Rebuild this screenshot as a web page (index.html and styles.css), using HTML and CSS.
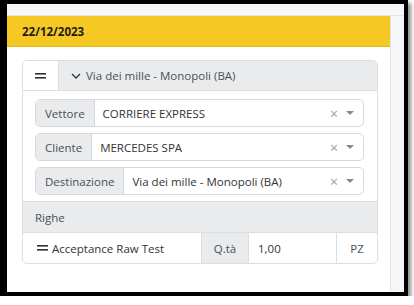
FILE: index.html
```html
<!DOCTYPE html>
<html>
<head>
<meta charset="utf-8">
<link rel="stylesheet" href="styles.css">
</head>
<body>
<div class="frame">
  <div class="topstrip"></div>
  <div class="main">
    <div class="panel">
      <div class="datebar">22/12/2023</div>
      <div class="content">
        <div class="card">
          <div class="card-head">
            <div class="handle">
              <svg width="11" height="6" viewBox="0 0 11 6"><rect x="0" y="0" width="11" height="1.6" fill="#333"/><rect x="0" y="4" width="11" height="1.6" fill="#333"/></svg>
            </div>
            <div class="head-title">
              <svg class="chev" width="10" height="6" viewBox="0 0 10 6"><path d="M1 1 L5 5 L9 1" fill="none" stroke="#333" stroke-width="1.3"/></svg>
              <span>Via dei mille - Monopoli (BA)</span>
            </div>
          </div>
          <div class="card-body">
            <div class="igroup">
              <div class="ilabel">Vettore</div>
              <div class="ivalue"><span class="val">CORRIERE EXPRESS</span><span class="clear">×</span><span class="caret"></span></div>
            </div>
            <div class="igroup">
              <div class="ilabel">Cliente</div>
              <div class="ivalue"><span class="val">MERCEDES SPA</span><span class="clear">×</span><span class="caret"></span></div>
            </div>
            <div class="igroup">
              <div class="ilabel">Destinazione</div>
              <div class="ivalue"><span class="val">Via dei mille - Monopoli (BA)</span><span class="clear">×</span><span class="caret"></span></div>
            </div>
          </div>
          <div class="righe">Righe</div>
          <div class="row">
            <div class="row-name">
              <svg width="11" height="6" viewBox="0 0 11 6"><rect x="0" y="0" width="11" height="1.6" fill="#333"/><rect x="0" y="4" width="11" height="1.6" fill="#333"/></svg>
              <span>Acceptance Raw Test</span>
            </div>
            <div class="qta">Q.tà</div>
            <div class="qval">1,00</div>
            <div class="unit">PZ</div>
          </div>
        </div>
      </div>
    </div>
    <div class="side"></div>
  </div>
</div>
</body>
</html>
```
FILE: styles.css
```css
* { box-sizing: border-box; }
html, body { margin: 0; padding: 0; background: #fff; }
body {
  font-family: "Open Sans", "Noto Sans", sans-serif;
  font-size: 11.5px;
  color: #495057;
}
.frame {
  width: 408px;
  height: 296px;
  border-style: solid;
  border-color: #000;
  border-width: 4px 4px 4px 7px;
  display: flex;
  flex-direction: column;
  box-shadow: 3px 3px 4px rgba(0,0,0,0.45);
  background: #fff;
}
.topstrip {
  height: 12px;
  background: #f6f7f8;
  border-bottom: 1px solid #e2e4e6;
  flex: none;
}
.main {
  flex: 1;
  display: flex;
}
.panel {
  flex: 1;
  display: flex;
  flex-direction: column;
}
.side {
  width: 14px;
  background: #f6f7f8;
  border-left: 1px solid #e2e4e6;
}
.datebar {
  height: 31px;
  background: #f6c823;
  border-bottom: 1px solid #e3b51a;
  padding-left: 15px;
  display: flex;
  align-items: center;
  font-weight: 700;
  color: #1c1c1c;
  font-size: 11.5px;
}
.content {
  padding: 13px 12px 0 15px;
}
.card {
  border: 1px solid #dcdfe2;
  border-radius: 5px;
  overflow: hidden;
}
.card-head {
  display: flex;
  height: 30px;
  border-bottom: 1px solid #dcdfe2;
}
.handle {
  width: 35px;
  display: flex;
  align-items: center;
  justify-content: center;
  background: #fff;
}
.head-title {
  flex: 1;
  background: #e9ebed;
  border-left: 1px solid #dcdfe2;
  display: flex;
  align-items: center;
  padding-left: 12px;
}
.chev { margin-right: 5px; }
.card-body {
  padding: 8px 13px 6px 12px;
  display: flex;
  flex-direction: column;
  gap: 6px;
}
.igroup {
  display: flex;
  height: 28px;
  border: 1px solid #d5d9dd;
  border-radius: 5px;
  overflow: hidden;
}
.ilabel {
  background: #e9ebed;
  border-right: 1px solid #d5d9dd;
  padding: 0 9px;
  display: flex;
  align-items: center;
}
.ivalue {
  flex: 1;
  display: flex;
  align-items: center;
  padding-left: 8px;
  color: #333;
}
.val { flex: 1; }
.clear {
  color: #9aa0a6;
  font-size: 14px;
  margin-right: 8px;
}
.caret {
  width: 0; height: 0;
  border-left: 4px solid transparent;
  border-right: 4px solid transparent;
  border-top: 4px solid #888;
  margin-right: 9px;
}
.righe {
  height: 32px;
  background: #e9ebed;
  border-top: 1px solid #dcdfe2;
  border-bottom: 1px solid #dcdfe2;
  padding-left: 12px;
  display: flex;
  align-items: center;
}
.row {
  display: flex;
  height: 30px;
}
.row-name {
  flex: 1;
  display: flex;
  align-items: center;
  padding-left: 14px;
  gap: 4px;
  color: #333;
}
.qta {
  width: 48px;
  background: #e9ebed;
  border-left: 1px solid #dcdfe2;
  border-right: 1px solid #dcdfe2;
  display: flex;
  align-items: center;
  justify-content: center;
}
.qval {
  width: 87px;
  display: flex;
  align-items: center;
  padding-left: 9px;
  color: #333;
}
.unit {
  width: 41px;
  border-left: 1px solid #dcdfe2;
  display: flex;
  align-items: center;
  justify-content: center;
}
```
